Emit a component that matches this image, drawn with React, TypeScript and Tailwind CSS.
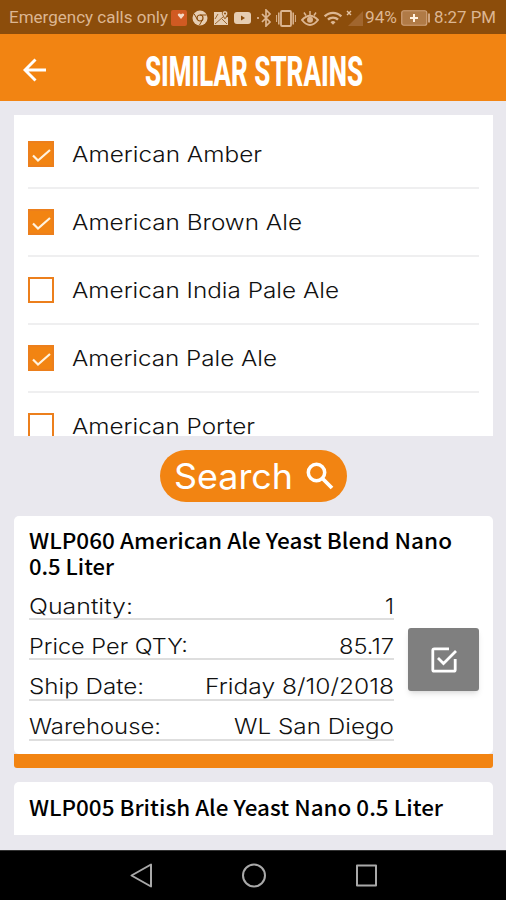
import React, { useLayoutEffect, useRef, useState } from 'react';
import { MdWifi } from 'react-icons/md';

// Stretches one line of text to the width of its box
const FitText: React.FC<{ className?: string; children: string }> = ({ className = '', children }) => {
  const box = useRef<HTMLSpanElement>(null);
  const text = useRef<HTMLSpanElement>(null);
  const [scale, setScale] = useState(1);

  useLayoutEffect(() => {
    if (box.current && text.current) {
      setScale(box.current.offsetWidth / text.current.getBoundingClientRect().width);
    }
  }, []);

  return (
    <span ref={box} className={`block shrink-0 whitespace-nowrap ${className}`}>
      <span ref={text} className="inline-block origin-left align-top" style={{ transform: `scaleX(${scale})` }}>
        {children}
      </span>
    </span>
  );
};

const styles = [
  { name: 'American Amber', checked: true, width: 'w-[190px]' },
  { name: 'American Brown Ale', checked: true, width: 'w-[230px]' },
  { name: 'American India Pale Ale', checked: false, width: 'w-[267px]' },
  { name: 'American Pale Ale', checked: true, width: 'w-[205px]' },
  { name: 'American Porter', checked: false, width: 'w-[183px]' },
];

const details = [
  { label: 'Quantity:', value: '1', labelWidth: 'w-[104px]', valueWidth: 'w-[9px]' },
  { label: 'Price Per QTY:', value: '85.17', labelWidth: 'w-[159px]', valueWidth: 'w-[55px]' },
  { label: 'Ship Date:', value: 'Friday 8/10/2018', labelWidth: 'w-[115px]', valueWidth: 'w-[189px]' },
  { label: 'Warehouse:', value: 'WL San Diego', labelWidth: 'w-[132px]', valueWidth: 'w-[160px]' },
];

const StatusBar: React.FC = () => (
  <div className="flex h-[34px] shrink-0 items-center bg-[#8c4d0b] pt-[2px] pl-[9px] font-['Roboto',sans-serif] text-[17px] font-normal text-[#dcb692]">
    <FitText className="w-[159px]">Emergency calls only</FitText>
    <svg className="ml-[3px] h-[16px] w-[16px] shrink-0" viewBox="0 0 16 16">
      <rect width="16" height="16" rx="2" fill="#d05a22" />
      <path d="M10 9 7 5.500c-1-2 2-3 3-1 1-2 4-1 3 1z" fill="#f5d9c6" />
    </svg>
    <svg className="ml-[5px] h-[16px] w-[16px] shrink-0" viewBox="0 0 16 16">
      <circle cx="8" cy="8" r="7.500" fill="#e6cdb2" />
      <circle cx="8" cy="8" r="3" fill="none" stroke="#8c4d0b" strokeWidth="1.200" />
      <path d="M8 5h6.500M5.400 9.500 2.200 4M10.600 9.500 7.500 15" stroke="#8c4d0b" />
    </svg>
    <svg className="ml-[5px] h-[16px] w-[16px] shrink-0" viewBox="0 0 16 16">
      <path d="M1 2h8l2 6 4-1v8H1z" fill="#e6cdb2" />
      <path d="m2 14 8-7M9 9l5 5M2 9l3-5" stroke="#8c4d0b" strokeWidth=".8" />
      <path d="M12 9 9.500 4.500C8-.5 16-.5 14.500 4.500z" fill="#e6cdb2" stroke="#8c4d0b" strokeWidth=".7" />
      <circle cx="12" cy="3.500" r="1" fill="#8c4d0b" />
    </svg>
    <svg className="ml-[5px] h-[12px] w-[17px] shrink-0" viewBox="0 0 17 12">
      <rect width="17" height="12" rx="3" fill="#e6cdb2" />
      <path d="m7 3.500 4 2.500-4 2.500z" fill="#8c4d0b" />
    </svg>
    <span className="ml-[6px] h-[2px] w-[2px] shrink-0 bg-[#d0a580]" />
    <svg className="ml-[2px] h-[18px] w-[11px] shrink-0" viewBox="0 0 11 18" fill="none" stroke="currentColor" strokeWidth="1.700">
      <path d="m1 5 8 8-4 4V1l4 4-8 8" />
    </svg>
    <svg className="ml-[4px] h-[17px] w-[20px] shrink-0" viewBox="0 0 20 17" fill="none" stroke="currentColor">
      <rect x="5" y="1" width="10" height="15" rx="1" strokeWidth="1.800" />
      <path d="M2.800 2.500v12M17.200 2.500v12" strokeWidth="1.500" />
      <path d="M.6 5v7M19.400 5v7" />
    </svg>
    <svg className="ml-[5px] h-[17px] w-[18px] shrink-0" viewBox="0 0 18 17" fill="none" stroke="currentColor" strokeWidth="1.900">
      <path d="M1 10q8-8.500 16 0-8 10-16 0z" />
      <circle cx="9" cy="9.800" r="3" fill="currentColor" stroke="none" />
      <path d="M9 1v4M3 2.500l2 3M15 2.500l-2 3" strokeWidth="1.500" />
    </svg>
    <MdWifi className="ml-[4px] h-[20px] w-[20px] shrink-0" />
    <svg className="ml-[3px] h-[17px] w-[18px] shrink-0" viewBox="0 0 18 17">
      <path d="M17 1v15H2z" fill="#a1662e" />
      <path d="m1 1 4 4m0-4L1 5" stroke="#e3c3a4" strokeWidth="1.400" />
    </svg>
    <FitText className="ml-[1px] w-[32px]">94%</FitText>
    <svg className="ml-[4px] h-[16px] w-[30px] shrink-0" viewBox="0 0 30 16">
      <rect x=".75" y=".75" width="25" height="14.500" rx="2" fill="#b07a46" stroke="#cfa27b" strokeWidth="1.200" />
      <path d="M13 4v8M9 8h8" stroke="#fff0df" strokeWidth="2" />
      <path d="M28 3.500v9" stroke="#d0a580" strokeWidth="2" />
    </svg>
    <FitText className="ml-[3px] w-[62px]">8:27 PM</FitText>
  </div>
);

const Header: React.FC = () => (
  <header className="flex h-[67px] shrink-0 items-center bg-[#f28412] pt-1 text-white">
    <svg className="ml-[23px] h-[24px] w-[24px]" viewBox="0 0 24 24" fill="none" stroke="white" strokeWidth="2.900">
      <path d="M23 12H2.500M12.500 1.500 2 12l10.500 10.500" />
    </svg>
    <h1 className="mt-[5px] ml-[98px] font-['Roboto',sans-serif] text-[42px] leading-none font-extrabold">
      <FitText className="w-[218px]">SIMILAR STRAINS</FitText>
    </h1>
  </header>
);

const Checkbox: React.FC<{ checked: boolean }> = ({ checked }) => (
  <span className={`block h-[26px] w-[26px] shrink-0 border-2 border-[#ec7f1c] ${checked ? 'bg-[#f28412]' : 'bg-white'}`}>
    {checked && (
      <svg className="h-[22px] w-[22px]" viewBox="0 0 22 22" fill="none" stroke="#fff3df" strokeWidth="2.200">
        <path d="m3 12.500 5 5L20 7" />
      </svg>
    )}
  </span>
);

const StyleList: React.FC = () => (
  <section className="h-[321px] shrink-0 overflow-hidden bg-white px-[14px] pt-[6px]">
    {styles.map(({ name, checked, width }) => (
      <div key={name} className="flex h-[68px] items-center border-b-2 border-[#efeff0]">
        <Checkbox checked={checked} />
        <FitText className={`mt-px ml-[17.5px] text-[21.5px] ${width}`}>{name}</FitText>
      </div>
    ))}
  </section>
);

const ProductCard: React.FC = () => (
  <article className="mt-[14px] h-[252px] shrink-0">
    <div className="h-[238px] rounded-[5px] bg-white pt-[11px] pl-[15px]">
      <h2 className="font-['Noto_Sans_CJK_KR',sans-serif] text-[21.5px] leading-[26px] font-medium text-black">
        <FitText className="w-[423px]">WLP060 American Ale Yeast Blend Nano</FitText>
        <FitText className="w-[85px]">0.5 Liter</FitText>
      </h2>
      <div className="mt-px flex">
        <dl className="w-[365px]">
          {details.map(({ label, value, labelWidth, valueWidth }) => (
            <div key={label} className="flex h-[40.2px] items-end justify-between border-b-2 border-[#dedede] text-[21.5px] leading-[24.6px]">
              <dt>
                <FitText className={labelWidth}>{label}</FitText>
              </dt>
              <dd>
                <FitText className={valueWidth}>{value}</FitText>
              </dd>
            </div>
          ))}
        </dl>
        <button className="mt-[48px] ml-[14px] flex h-[63px] w-[71px] items-center justify-center rounded-[3px] bg-[#7f7f7f] shadow-md">
          <svg className="h-[26px] w-[26px]" viewBox="0 0 26 26" fill="none" stroke="white" strokeWidth="2.800">
            <path d="M18 1.800H3.300q-1.500 0-1.500 1.500v19.400q0 1.500 1.500 1.500h19.400q1.500 0 1.500-1.500V12" />
            <path d="m7 11 5.500 5.500L25 4" />
          </svg>
        </button>
      </div>
    </div>
    <div className="h-[14px] rounded-b-[3px] bg-[#f28412]" />
  </article>
);

const NavBar: React.FC = () => (
  <nav className="flex h-[50px] shrink-0 items-center justify-center border-t border-[#333] bg-black">
    <svg className="h-[26px] w-[250px]" viewBox="0 0 250 26" fill="none" stroke="#a9a9a9" strokeWidth="2" strokeLinejoin="round">
      <path d="M23 1.500v22L3.500 12.500z" />
      <circle cx="126" cy="12.500" r="11" />
      <path d="M229 2.500h19v20h-19z" />
    </svg>
  </nav>
);

export default function App() {
  return (
    <div className="flex h-[900px] w-[506px] flex-col overflow-hidden bg-[#e9e8ee] font-['Inter',sans-serif] font-light text-[#111]">
      <StatusBar />
      <Header />
      <main className="flex h-[749px] shrink-0 flex-col pt-[14px] pr-[13px] pl-[14px]">
        <StyleList />
        <button className="mt-[14px] ml-[146px] flex h-[52px] w-[187px] shrink-0 items-center rounded-full bg-[#f28412] pl-[13px] text-[35px] leading-none font-normal text-white">
          <FitText className="w-[119px]">Search</FitText>
          <svg className="ml-[14px] h-[28px] w-[28px]" viewBox="0 0 28 28" fill="none" stroke="white" strokeWidth="3.500">
            <circle cx="10.500" cy="10.500" r="8.200" />
            <path d="m16.500 16.500 9.500 9.500" strokeWidth="3.800" />
          </svg>
        </button>
        <ProductCard />
        <article className="mt-[14px] h-[53px] shrink-0 rounded-t-[5px] bg-white pt-[12px] pl-[15px]">
          <h2 className="font-['Noto_Sans_CJK_KR',sans-serif] text-[21.5px] leading-[26px] font-medium text-black">
            <FitText className="w-[414px]">WLP005 British Ale Yeast Nano 0.5 Liter</FitText>
          </h2>
        </article>
      </main>
      <NavBar />
    </div>
  );
}
